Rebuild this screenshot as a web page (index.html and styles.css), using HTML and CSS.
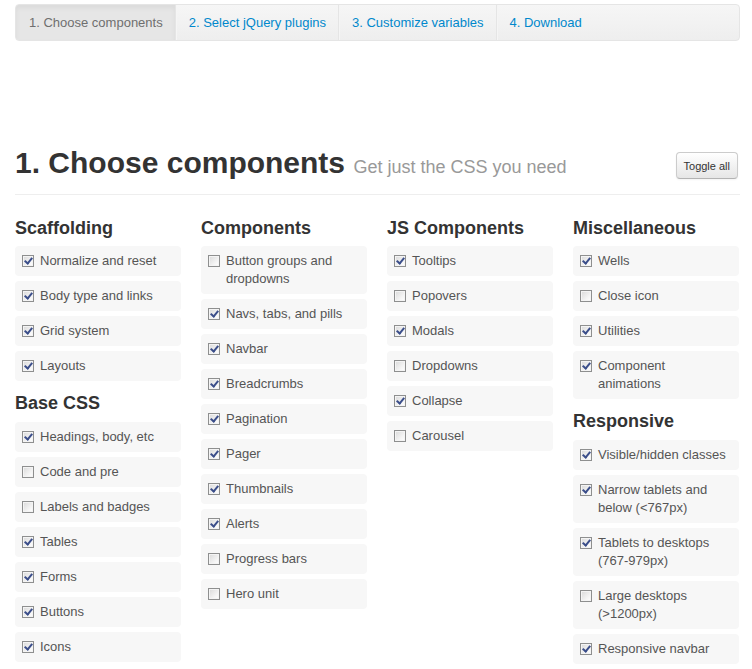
FILE: index.html
```html
<!DOCTYPE html>
<html>
<head>
<meta charset="utf-8">
<link rel="stylesheet" href="styles.css">
</head>
<body>
<div class="container">
  <nav class="subnav">
    <a class="tab active">1. Choose components</a>
    <a class="tab">2. Select jQuery plugins</a>
    <a class="tab">3. Customize variables</a>
    <a class="tab">4. Download</a>
  </nav>

  <div class="page-header">
    <h1>1. Choose components <small>Get just the CSS you need</small></h1>
    <button class="btn">Toggle all</button>
  </div>

  <div class="row">
    <div class="col">
      <h3>Scaffolding</h3>
      <label class="item"><span class="cb on"></span><span class="txt">Normalize and reset</span></label>
      <label class="item"><span class="cb on"></span><span class="txt">Body type and links</span></label>
      <label class="item"><span class="cb on"></span><span class="txt">Grid system</span></label>
      <label class="item"><span class="cb on"></span><span class="txt">Layouts</span></label>
      <h3>Base CSS</h3>
      <label class="item"><span class="cb on"></span><span class="txt">Headings, body, etc</span></label>
      <label class="item"><span class="cb"></span><span class="txt">Code and pre</span></label>
      <label class="item"><span class="cb"></span><span class="txt">Labels and badges</span></label>
      <label class="item"><span class="cb on"></span><span class="txt">Tables</span></label>
      <label class="item"><span class="cb on"></span><span class="txt">Forms</span></label>
      <label class="item"><span class="cb on"></span><span class="txt">Buttons</span></label>
      <label class="item"><span class="cb on"></span><span class="txt">Icons</span></label>
    </div>
    <div class="col">
      <h3>Components</h3>
      <label class="item"><span class="cb"></span><span class="txt">Button groups and dropdowns</span></label>
      <label class="item"><span class="cb on"></span><span class="txt">Navs, tabs, and pills</span></label>
      <label class="item"><span class="cb on"></span><span class="txt">Navbar</span></label>
      <label class="item"><span class="cb on"></span><span class="txt">Breadcrumbs</span></label>
      <label class="item"><span class="cb on"></span><span class="txt">Pagination</span></label>
      <label class="item"><span class="cb on"></span><span class="txt">Pager</span></label>
      <label class="item"><span class="cb on"></span><span class="txt">Thumbnails</span></label>
      <label class="item"><span class="cb on"></span><span class="txt">Alerts</span></label>
      <label class="item"><span class="cb"></span><span class="txt">Progress bars</span></label>
      <label class="item"><span class="cb"></span><span class="txt">Hero unit</span></label>
    </div>
    <div class="col">
      <h3>JS Components</h3>
      <label class="item"><span class="cb on"></span><span class="txt">Tooltips</span></label>
      <label class="item"><span class="cb"></span><span class="txt">Popovers</span></label>
      <label class="item"><span class="cb on"></span><span class="txt">Modals</span></label>
      <label class="item"><span class="cb"></span><span class="txt">Dropdowns</span></label>
      <label class="item"><span class="cb on"></span><span class="txt">Collapse</span></label>
      <label class="item"><span class="cb"></span><span class="txt">Carousel</span></label>
    </div>
    <div class="col">
      <h3>Miscellaneous</h3>
      <label class="item"><span class="cb on"></span><span class="txt">Wells</span></label>
      <label class="item"><span class="cb"></span><span class="txt">Close icon</span></label>
      <label class="item"><span class="cb on"></span><span class="txt">Utilities</span></label>
      <label class="item"><span class="cb on"></span><span class="txt">Component animations</span></label>
      <h3>Responsive</h3>
      <label class="item"><span class="cb on"></span><span class="txt">Visible/hidden classes</span></label>
      <label class="item"><span class="cb on"></span><span class="txt">Narrow tablets and below (&lt;767px)</span></label>
      <label class="item"><span class="cb on"></span><span class="txt">Tablets to desktops (767-979px)</span></label>
      <label class="item"><span class="cb"></span><span class="txt">Large desktops (&gt;1200px)</span></label>
      <label class="item"><span class="cb on"></span><span class="txt">Responsive navbar</span></label>
    </div>
  </div>
</div>
</body>
</html>
```

FILE: styles.css
```css
html, body {
  margin: 0;
  padding: 0;
  background: #ffffff;
}

body {
  font-family: "Liberation Sans", Arial, sans-serif;
  font-size: 13px;
  line-height: 18px;
  color: #333333;
}

.container {
  width: 725px;
  margin-left: 15px;
}

/* sub navigation */
.subnav {
  display: flex;
  margin-top: 4px;
  height: 35px;
  background: linear-gradient(#f6f6f6, #eeeeee);
  border: 1px solid #e5e5e5;
  border-radius: 4px;
  overflow: hidden;
}

.tab {
  display: block;
  padding: 9px 12px 8px 12px;
  line-height: 18px;
  color: #0088cc;
  border-left: 1px solid #f5f5f5;
  border-right: 1px solid #e5e5e5;
  cursor: pointer;
}

.tab:first-child {
  border-left: 0;
}

.tab:last-child {
  border-right: 0;
}

.tab.active {
  color: #6f6f6f;
  background: #e6e6e6;
  box-shadow: inset 0 3px 5px rgba(0, 0, 0, 0.05);
  padding-left: 13px;
}

/* page header */
.page-header {
  display: flex;
  justify-content: space-between;
  align-items: flex-start;
  margin-top: 104px;
  padding-bottom: 13px;
  border-bottom: 1px solid #eeeeee;
  width: 725px;
}

h1 {
  margin: 0;
  font-size: 30px;
  line-height: 36px;
  font-weight: bold;
  color: #333333;
}

h1 small {
  font-size: 18px;
  line-height: 1;
  font-weight: normal;
  color: #999999;
}

.btn {
  margin-top: 7px;
  margin-right: 2px;
  height: 27px;
  padding: 0 7px;
  font-family: "Liberation Sans", Arial, sans-serif;
  font-size: 11px;
  color: #333333;
  background: linear-gradient(#ffffff, #e6e6e6);
  border: 1px solid #cccccc;
  border-bottom-color: #b3b3b3;
  border-radius: 4px;
  box-shadow: inset 0 1px 0 rgba(255, 255, 255, 0.2), 0 1px 2px rgba(0, 0, 0, 0.05);
}

/* columns */
.row {
  display: grid;
  grid-template-columns: repeat(4, 166px);
  column-gap: 20px;
  margin-top: 17px;
}

.col {
  display: flex;
  flex-direction: column;
}

h3 {
  margin: 4px 0 5px;
  font-size: 18px;
  line-height: 27px;
  font-weight: bold;
  color: #333333;
}

h3:first-child {
  margin-top: 3px;
  margin-bottom: 4px;
}

.item {
  display: flex;
  align-items: flex-start;
  padding: 6px 8px 6px 7px;
  margin-bottom: 5px;
  background: #f7f7f7;
  border-radius: 4px;
  color: #555555;
}

.cb {
  flex: none;
  box-sizing: border-box;
  width: 12px;
  height: 12px;
  margin-top: 3px;
  margin-right: 6px;
  border: 1px solid #8e8f8f;
  background: linear-gradient(135deg, #d9d9d9, #f6f6f6 70%, #ffffff);
  box-shadow: inset 0 0 0 1px #f4f4f4;
  position: relative;
}

.cb.on::after {
  content: "";
  position: absolute;
  left: 3px;
  top: 0px;
  width: 3px;
  height: 6px;
  border-right: 2px solid #3b4e8a;
  border-bottom: 2px solid #3b4e8a;
  transform: rotate(40deg);
}

.txt {
  display: block;
}
```
